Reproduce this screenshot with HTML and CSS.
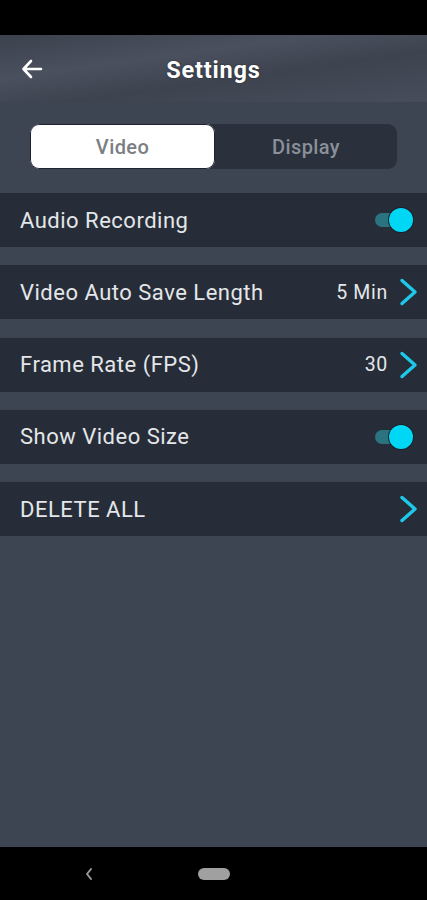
FILE: index.html
```html
<!DOCTYPE html>
<html>
<head>
<meta charset="utf-8">
<link rel="stylesheet" href="styles.css">
</head>
<body>
<div class="screen">
  <div class="statusbar"></div>
  <header class="header">
    <svg class="back" width="22" height="20" viewBox="0 0 22 20"><path d="M20 10H3M10 2L2.5 10L10 18" fill="none" stroke="#fff" stroke-width="2.6" stroke-linecap="round" stroke-linejoin="round"/></svg>
    <h1 class="title">Settings</h1>
  </header>
  <main class="content">
    <div class="tabs">
      <div class="tab active">Video</div>
      <div class="tab">Display</div>
    </div>
    <div class="list">
      <div class="row">
        <span class="label">Audio Recording</span>
        <span class="toggle"><span class="track"></span><span class="knob"></span></span>
      </div>
      <div class="row">
        <span class="label">Video Auto Save Length</span>
        <span class="right"><span class="value">5 Min</span><svg class="chev" width="20" height="28" viewBox="0 0 20 28"><path d="M3 2.5L16 14L3 25.5" fill="none" stroke="#1ec8ea" stroke-width="3.4" stroke-linecap="round" stroke-linejoin="round"/></svg></span>
      </div>
      <div class="row">
        <span class="label">Frame Rate (FPS)</span>
        <span class="right"><span class="value">30</span><svg class="chev" width="20" height="28" viewBox="0 0 20 28"><path d="M3 2.5L16 14L3 25.5" fill="none" stroke="#1ec8ea" stroke-width="3.4" stroke-linecap="round" stroke-linejoin="round"/></svg></span>
      </div>
      <div class="row">
        <span class="label">Show Video Size</span>
        <span class="toggle"><span class="track"></span><span class="knob"></span></span>
      </div>
      <div class="row">
        <span class="label">DELETE ALL</span>
        <span class="right"><svg class="chev" width="20" height="28" viewBox="0 0 20 28"><path d="M3 2.5L16 14L3 25.5" fill="none" stroke="#1ec8ea" stroke-width="3.4" stroke-linecap="round" stroke-linejoin="round"/></svg></span>
      </div>
    </div>
  </main>
  <nav class="navbar">
    <svg class="nav-back" width="10" height="14" viewBox="0 0 10 14"><path d="M7 2L3 7L7 12" fill="none" stroke="#9a9a9a" stroke-width="2" stroke-linecap="round" stroke-linejoin="round"/></svg>
    <span class="pill"></span>
  </nav>
</div>
</body>
</html>
```
FILE: styles.css
```css
* { box-sizing: border-box; }
html, body { margin: 0; padding: 0; }
body { font-family: Roboto, "Noto Sans", sans-serif; background: #000; }
.screen { width: 427px; height: 900px; display: flex; flex-direction: column; background: #3e4552; }
.statusbar { height: 35px; background: #000; flex: none; }
.header {
  height: 67px; flex: none; position: relative;
  display: flex; align-items: center; justify-content: center;
  background: linear-gradient(172deg, #3b414d 0%, #4a505d 35%, #3d434f 60%, #474d5a 100%);
}
.back { position: absolute; left: 21px; top: 24px; }
.title { margin: 0 0 -2px 0; font-size: 23.5px; font-weight: 700; color: #fff; letter-spacing: 0.8px; text-shadow: 0 0 2px rgba(0,0,0,0.5); }
.content { flex: 1; display: flex; flex-direction: column; padding-top: 22px; }
.tabs {
  margin: 0 30px; height: 45px; display: flex;
  background: #2a313c; border-radius: 9px; overflow: hidden;
}
.tab { flex: 1; display: flex; align-items: center; justify-content: center; font-size: 20px; font-weight: 500; letter-spacing: 0.4px; color: #8a9099; }
.tab.active { flex: 0 0 185px; background: #fff; color: #7b7e83; border-radius: 9px; box-shadow: inset 0 0 0 1px #1d2233; }
.list { margin-top: 24px; display: flex; flex-direction: column; gap: 18.3px; }
.row {
  height: 54px; background: #262d38; display: flex; align-items: center; justify-content: space-between;
  padding: 0 8px 0 20px;
}
.label { font-size: 22px; letter-spacing: 0.5px; color: #e4e6e9; }
.right { display: flex; align-items: center; gap: 11px; }
.value { font-size: 19.5px; letter-spacing: 0.7px; color: #e4e6e9; }
.chev { display: block; }
.toggle { position: relative; width: 40px; height: 24px; margin-right: 6px; }
.track { position: absolute; left: 2px; top: 5px; width: 30px; height: 14px; border-radius: 7px; background: #2b737f; }
.knob { position: absolute; right: 0; top: 0; width: 24px; height: 24px; border-radius: 50%; background: #00d7f4; box-shadow: 0 0 0 1px #1b2028; }
.navbar { height: 53px; flex: none; background: #000; position: relative; display: flex; align-items: center; justify-content: center; }
.nav-back { position: absolute; left: 84px; top: 20px; }
.pill { width: 32px; height: 12px; border-radius: 6px; background: #a0a0a0; }
```
